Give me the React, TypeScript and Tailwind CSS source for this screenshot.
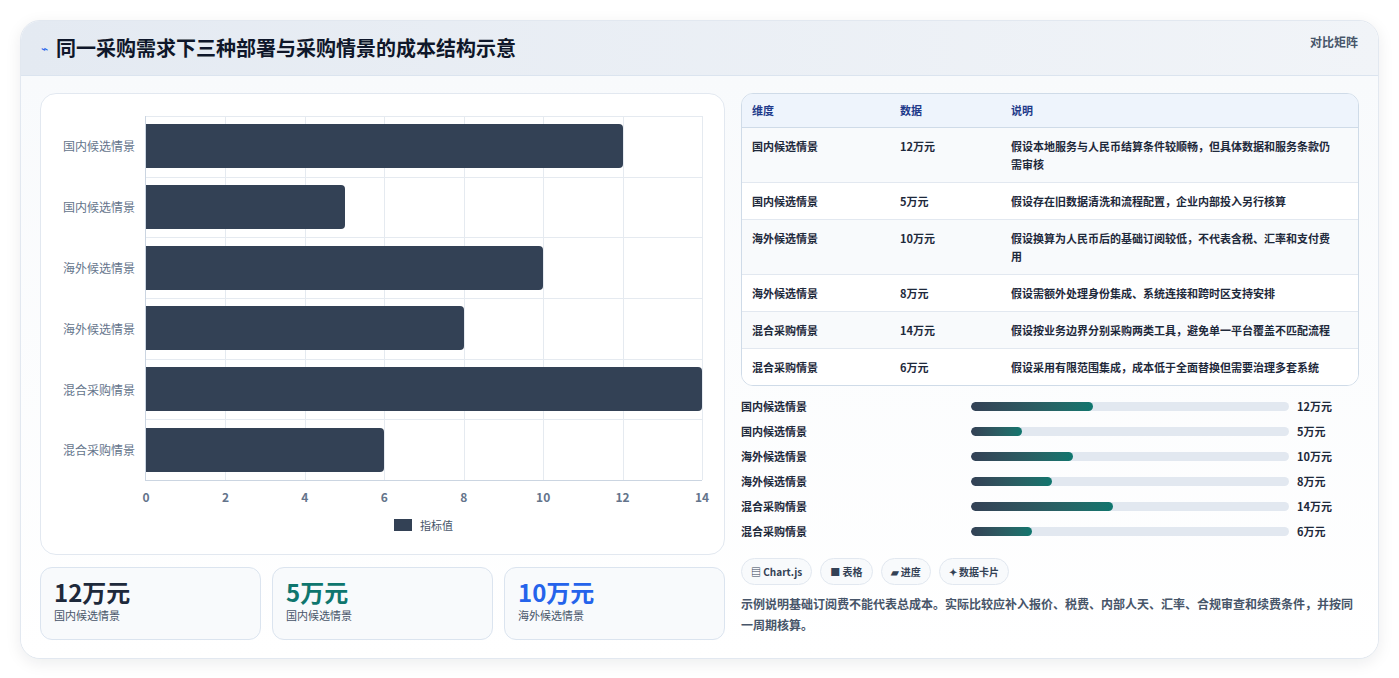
const rows = [
  { name: "国内候选情景", v: 12, d: "假设本地服务与人民币结算条件较顺畅，但具体数据和服务条款仍需审核" },
  { name: "国内候选情景", v: 5, d: "假设存在旧数据清洗和流程配置，企业内部投入另行核算" },
  { name: "海外候选情景", v: 10, d: "假设换算为人民币后的基础订阅较低，不代表含税、汇率和支付费用" },
  { name: "海外候选情景", v: 8, d: "假设需额外处理身份集成、系统连接和跨时区支持安排" },
  { name: "混合采购情景", v: 14, d: "假设按业务边界分别采购两类工具，避免单一平台覆盖不匹配流程" },
  { name: "混合采购情景", v: 6, d: "假设采用有限范围集成，成本低于全面替换但需要治理多套系统" },
];

const font = { fontFamily: '"Noto Sans CJK SC", "Noto Sans", sans-serif' };

function Chart() {
  return (
    <div className="h-[462px] rounded-2xl border border-[#e2e8f0] bg-white pt-[22px] pr-[22px] pl-[14px]">
      <div className="flex">
        <div className="flex w-[90px] flex-col">
          {rows.map((r, i) => (
            <div key={i} className="flex h-[60.8px] items-center justify-end pr-[10px] text-[12px] text-[#64748b]">{r.name}</div>
          ))}
        </div>
        <div className="relative h-[365px] flex-1 border-l border-b border-[#cbd5e1]">
          {[1, 2, 3, 4, 5, 6, 7].map((t) => (
            <div key={t} className="absolute top-0 bottom-0 w-px bg-[#e5eaf0]" style={{ left: `${(t / 7) * 100}%` }} />
          ))}
          {[0, 1, 2, 3, 4, 5].map((t) => (
            <div key={t} className="absolute left-0 right-0 h-px bg-[#e5eaf0]" style={{ top: `${(t / 6) * 100}%` }} />
          ))}
          <div className="relative flex h-full flex-col">
            {rows.map((r, i) => (
              <div key={i} className="flex flex-1 items-center">
                <div className="h-[44px] rounded-r-[4px] bg-[#334155]" style={{ width: `${(r.v / 14) * 100}%` }} />
              </div>
            ))}
          </div>
          {[0, 2, 4, 6, 8, 10, 12, 14].map((t) => (
            <div key={t} className="absolute top-[372px] -translate-x-1/2 text-[12px] font-semibold text-[#64748b]" style={{ left: `${(t / 14) * 100}%` }}>{t}</div>
          ))}
        </div>
      </div>
      <div className="mt-[36px] flex items-center justify-center gap-2 pl-[90px] text-[11px] text-[#475569]">
        <span className="h-[12px] w-[18px] bg-[#334155]" />指标值
      </div>
    </div>
  );
}

export default function App() {
  return (
    <div className="min-h-[678px] bg-white p-5" style={font}>
      <div className="overflow-hidden rounded-[20px] border border-[#e2e8f0] bg-white shadow-[0_4px_16px_rgba(15,23,42,0.08)]">
        <div className="flex h-[55px] items-center justify-between border-b border-[#dbe4ef] bg-gradient-to-r from-[#e4eaf2] to-[#f1f4f8] px-5">
          <div className="flex items-center gap-2">
            <span className="text-[12px] text-[#2563eb]">⌁</span>
            <h1 className="text-[20px] font-bold text-[#0f172a]">同一采购需求下三种部署与采购情景的成本结构示意</h1>
          </div>
          <span className="-mt-[12px] text-[12px] font-semibold text-[#475569]">对比矩阵</span>
        </div>
        <div className="flex gap-4 bg-gradient-to-b from-[#f8fafc] to-white px-[19px] pt-[17px] pb-[18px]">
          <div className="flex w-[685px] flex-col gap-3">
            <Chart />
            <div className="grid grid-cols-3 gap-[11px]">
              {[
                { v: "12万元", c: "text-[#1e293b]" },
                { v: "5万元", c: "text-[#0f766e]" },
                { v: "10万元", c: "text-[#2563eb]" },
              ].map((s, i) => (
                <div key={i} className="h-[73px] rounded-xl border border-[#dbe4ef] bg-[#f8fafc] px-[13px] pt-[9px]">
                  <div className={`text-[24px] leading-[30px] font-bold ${s.c}`}>{s.v}</div>
                  <div className="text-[11px] text-[#475569]">{rows[i].name}</div>
                </div>
              ))}
            </div>
          </div>
          <div className="flex flex-1 flex-col">
            <div className="overflow-hidden rounded-xl border border-[#cfdbe8] text-[11px]">
              <div className="flex h-[34px] items-center border-b border-[#cfdbe8] bg-[#eef4fc] px-[10px] font-semibold text-[#1e3a8a]">
                <div className="w-[148px]">维度</div>
                <div className="w-[111px]">数据</div>
                <div className="flex-1">说明</div>
              </div>
              {rows.map((r, i) => (
                <div key={i} className={`flex px-[10px] py-[9px] leading-[18px] text-[#1e293b] ${i % 2 === 0 ? "bg-[#f8fafc]" : "bg-white"} ${i < 5 ? "border-b border-[#e2e8f0]" : ""}`}>
                  <div className="w-[148px] font-semibold">{r.name}</div>
                  <div className="w-[111px] font-semibold">{r.v}万元</div>
                  <div className="flex-1 pr-2 font-semibold">{r.d}</div>
                </div>
              ))}
            </div>
            <div className="mt-[8px] flex flex-col">
              {rows.map((r, i) => (
                <div key={i} className="flex h-[25px] items-center text-[11px] font-semibold text-[#1e293b]">
                  <div className="w-[230px]">{r.name}</div>
                  <div className="h-[9px] w-[318px] overflow-hidden rounded-full bg-[#e2e8f0]">
                    <div className="h-full rounded-full bg-gradient-to-r from-[#334155] to-[#0f766e]" style={{ width: `${(r.v / 31.25) * 100}%` }} />
                  </div>
                  <div className="ml-2">{r.v}万元</div>
                </div>
              ))}
            </div>
            <div className="mt-[14px] flex gap-[8px]">
              {["▤ Chart.js", "■ 表格", "▰ 进度", "✦ 数据卡片"].map((c) => (
                <span key={c} className="rounded-full border border-[#e2e8f0] bg-[#f8fafc] px-[9px] py-[5px] text-[10px] font-semibold text-[#334155]">{c}</span>
              ))}
            </div>
            <p className="mt-[8px] text-[12px] leading-[21px] font-semibold text-[#475569]">示例说明基础订阅费不能代表总成本。实际比较应补入报价、税费、内部人天、汇率、合规审查和续费条件，并按同一周期核算。</p>
          </div>
        </div>
      </div>
    </div>
  );
}
